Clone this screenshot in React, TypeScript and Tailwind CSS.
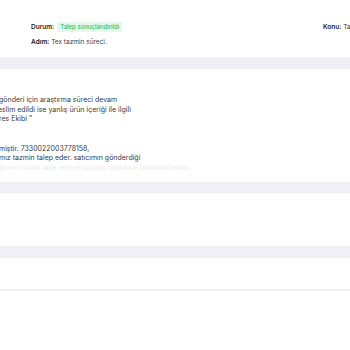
import React from "react";

export default function App() {
  return (
    <div className="w-[350px] h-[350px] overflow-hidden bg-white text-[#3a3a3a] [font-family:Inter,'Noto_Sans',sans-serif]">
      <div className="h-[57px] flex justify-between pt-[22px]">
        <div className="pl-[31px] flex flex-col gap-[5px]">
          <div className="flex items-center gap-[3px] text-[6.5px] leading-[10px]">
            <span className="font-semibold text-[#222]">Durum:</span>
            <span className="bg-[#e5f8ec] text-[#2cbf6a] px-[3px] font-medium text-[6px] leading-[10px]">Talep sonuçlandırıldı</span>
          </div>
          <div className="text-[6.5px] leading-[10px]">
            <span className="font-semibold text-[#222]">Adım:</span> Tex tazmin süreci.
          </div>
        </div>
        <div className="pt-[0px] text-[6.5px] leading-[10px] whitespace-nowrap -mr-[11px] w-[38px] overflow-hidden">
          <span className="font-semibold text-[#222]">Konu:</span> Tazmin
        </div>
      </div>
      <div className="h-[12px] bg-[#efeff5]" />
      <div className="h-[113px] pt-[26px] text-[7px] leading-[9.5px] whitespace-nowrap text-[#3a3a3a]">
        <div className="-ml-[1px]">gönderi için araştırma süreci devam</div>
        <div className="-ml-[2px]">eslim edildi ise yanlış ürün içeriği ile ilgili</div>
        <div className="-ml-[1px]">res Ekibi "</div>
        <div className="h-[20px]" />
        <div className="-ml-[1px]">miştir. 7330022003778158,</div>
        <div className="-ml-[1px]">mız tazmin talep eder. satıcımın gönderdiği</div>
        <div className="-ml-[1px] text-[#ececec]">ğunuz ürünü iade ederek tazmin talebinde bulunabilirsiniz.</div>
      </div>
      <div className="h-[11px] bg-[#efeff5]" />
      <div className="h-[53px]" />
      <div className="h-[12px] bg-[#efeff5]" />
      <div className="h-[31px]" />
      <div className="h-[2px] bg-[#f0f0f0]" />
    </div>
  );
}
